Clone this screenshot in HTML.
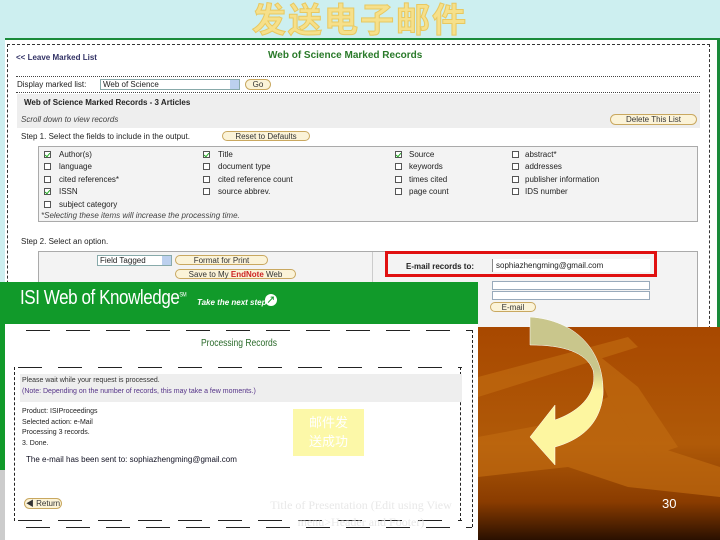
<!DOCTYPE html>
<html><head><meta charset="utf-8"><style>
*{margin:0;padding:0;box-sizing:border-box}
body{width:720px;height:540px;position:relative;overflow:hidden;background:#cdeff0;font-family:"Liberation Sans","Noto Sans CJK SC",sans-serif;font-size:8px;color:#222}
.a{position:absolute;white-space:nowrap}
.btn{position:absolute;border:1px solid #c9a860;border-radius:7px;background:#fbf3d8;font-size:8px;text-align:center;color:#333;line-height:9px}
.cb{position:absolute;width:7px;height:7px;border:1px solid #555;background:#fff}
.cb.on::after{content:"";position:absolute;left:1px;top:0;width:2px;height:4px;border:solid #2a2;border-width:0 1px 1px 0;transform:rotate(40deg)}
.sel{position:absolute;border:1px solid #8aa;background:#fff;font-size:8px;padding-left:2px;line-height:10px}
.sel::after{content:"";position:absolute;right:0;top:0;width:9px;height:100%;background:#bcd0ee}
.dl{position:absolute;height:1px;background:repeating-linear-gradient(90deg,#222 0 24px,transparent 24px 40px)}
</style></head><body>
<div class="a" style="left:0;top:1px;width:720px;text-align:center;font-size:34px;line-height:40px;font-weight:bold;color:#f6e08a;-webkit-text-stroke:1px #e8c860;letter-spacing:2px">发送电子邮件</div>
<!-- upper screenshot -->
<div class="a" style="left:5px;top:38px;width:715px;height:290px;background:#fff;border-top:2px solid #1a8a3a;border-right:3px solid #1a8a3a"></div>
<div class="a" style="left:7px;top:44px;width:703px;height:290px;border:1px dashed #333;border-bottom:none"></div>
<div class="a" style="left:16px;top:53px;color:#336;font-weight:bold">&lt;&lt; Leave Marked List</div>
<div class="a" style="left:268px;top:50px;color:#2a7a2a;font-weight:bold;font-size:10px">Web of Science Marked Records</div>
<div class="a" style="left:16px;top:76px;width:684px;border-top:1px dotted #444"></div>
<div class="a" style="left:17px;top:80px">Display marked list:</div>
<div class="sel" style="left:100px;top:79px;width:140px;height:11px">Web of Science</div>
<div class="btn" style="left:245px;top:79px;width:26px;height:11px">Go</div>
<div class="a" style="left:16px;top:92px;width:684px;border-top:1px dotted #444"></div>
<div class="a" style="left:17px;top:94px;width:683px;height:34px;background:#eee"></div>
<div class="a" style="left:24px;top:98px;font-weight:bold">Web of Science Marked Records - 3 Articles</div>
<div class="a" style="left:21px;top:115px;font-style:italic;color:#444">Scroll down to view records</div>
<div class="btn" style="left:610px;top:114px;width:87px;height:11px">Delete This List</div>
<div class="a" style="left:21px;top:132px">Step 1. Select the fields to include in the output.</div>
<div class="btn" style="left:222px;top:131px;width:88px;height:10px">Reset to Defaults</div>
<div class="a" style="left:38px;top:146px;width:660px;height:76px;background:#f3f3f3;border:1px solid #aaa"></div>
<div class="cb on" style="left:44px;top:151px"></div><div class="a" style="left:59px;top:150px">Author(s)</div>
<div class="cb on" style="left:203px;top:151px"></div><div class="a" style="left:218px;top:150px">Title</div>
<div class="cb on" style="left:395px;top:151px"></div><div class="a" style="left:409px;top:150px">Source</div>
<div class="cb" style="left:512px;top:151px"></div><div class="a" style="left:525px;top:150px">abstract*</div>
<div class="cb" style="left:44px;top:163px"></div><div class="a" style="left:59px;top:162px">language</div>
<div class="cb" style="left:203px;top:163px"></div><div class="a" style="left:218px;top:162px">document type</div>
<div class="cb" style="left:395px;top:163px"></div><div class="a" style="left:409px;top:162px">keywords</div>
<div class="cb" style="left:512px;top:163px"></div><div class="a" style="left:525px;top:162px">addresses</div>
<div class="cb" style="left:44px;top:176px"></div><div class="a" style="left:59px;top:175px">cited references*</div>
<div class="cb" style="left:203px;top:176px"></div><div class="a" style="left:218px;top:175px">cited reference count</div>
<div class="cb" style="left:395px;top:176px"></div><div class="a" style="left:409px;top:175px">times cited</div>
<div class="cb" style="left:512px;top:176px"></div><div class="a" style="left:525px;top:175px">publisher information</div>
<div class="cb on" style="left:44px;top:188px"></div><div class="a" style="left:59px;top:187px">ISSN</div>
<div class="cb" style="left:203px;top:188px"></div><div class="a" style="left:218px;top:187px">source abbrev.</div>
<div class="cb" style="left:395px;top:188px"></div><div class="a" style="left:409px;top:187px">page count</div>
<div class="cb" style="left:512px;top:188px"></div><div class="a" style="left:525px;top:187px">IDS number</div>
<div class="cb" style="left:44px;top:201px"></div><div class="a" style="left:59px;top:200px">subject category</div>
<div class="a" style="left:41px;top:211px;font-style:italic;color:#444">*Selecting these items will increase the processing time.</div>
<div class="a" style="left:21px;top:237px">Step 2. Select an option.</div>
<div class="a" style="left:38px;top:251px;width:660px;height:80px;background:#f3f3f3;border:1px solid #aaa"></div>
<div class="a" style="left:372px;top:252px;width:1px;height:78px;background:#ccc"></div>
<div class="sel" style="left:97px;top:255px;width:75px;height:11px">Field Tagged</div>
<div class="btn" style="left:175px;top:255px;width:93px;height:10px">Format for Print</div>
<div class="btn" style="left:175px;top:269px;width:121px;height:10px">Save to My <b style="color:#c22">EndNote</b> Web</div>
<div class="a" style="left:406px;top:262px;font-weight:bold">E-mail records to:</div>
<div class="a" style="left:492px;top:259px;width:158px;height:13px;background:#fff;border-left:1px solid #888;padding-left:3px;line-height:13px">sophiazhengming@gmail.com</div>
<div class="a" style="left:385px;top:251px;width:272px;height:26px;border:3px solid #e01010"></div>
<div class="a" style="left:492px;top:281px;width:158px;height:9px;background:#fff;border:1px solid #9ab"></div>
<div class="a" style="left:492px;top:291px;width:158px;height:9px;background:#fff;border:1px solid #9ab"></div>
<div class="btn" style="left:490px;top:302px;width:46px;height:10px">E-mail</div>
<!-- orange bg -->
<div class="a" style="left:478px;top:327px;width:242px;height:213px;background:linear-gradient(180deg,#a84800 0%,#b05a08 55%,#8a3c00 82%,#2a1000 100%)"></div>
<svg class="a" style="left:478px;top:327px" width="242" height="213"><g fill="#c06a10" opacity=".7"><path d="M0,110 L80,95 L130,70 L180,120 L242,140 L242,170 L150,160 L90,140 L0,150Z"/><path d="M110,20 L160,60 L200,120 L170,130 L130,70Z"/><path d="M0,50 L150,10 L160,20 L0,70Z"/></g></svg>
<svg class="a" style="left:478px;top:300px" width="242" height="180"><defs><linearGradient id="g" x1="0" y1="0" x2="0" y2="1"><stop offset=".35" stop-color="#c9c68c"/><stop offset=".5" stop-color="#fdf6a0"/></linearGradient></defs><path d="M52,17 C97,20 127,50 125,95 C122,125 102,140 77,147 L77,165 L52,137 L77,105 L77,120 C100,112 120,95 115,70 C108,52 85,45 52,45Z" fill="url(#g)" stroke="#fff" stroke-width=".5"/></svg>
<!-- lower overlay -->
<div class="a" style="left:0;top:282px;width:478px;height:42px;background:#119a2a"></div>
<div class="a" style="left:20px;top:287px;font-size:20px;color:#fff;letter-spacing:-.5px;transform:scaleX(.85);transform-origin:left">ISI Web of Knowledge<sup style="font-size:6px">SM</sup></div>
<div class="a" style="left:197px;top:298px;font-size:8px;color:#fff;font-style:italic;font-weight:bold">Take the next step</div>
<div class="a" style="left:265px;top:294px;width:12px;height:12px;border-radius:50%;background:#fff;color:#119a2a;font-size:9px;text-align:center;line-height:12px;font-weight:bold">↗</div>
<div class="a" style="left:0;top:324px;width:5px;height:146px;background:#119a2a"></div>
<div class="a" style="left:0;top:470px;width:5px;height:70px;background:#ccc"></div>
<div class="a" style="left:5px;top:324px;width:473px;height:216px;background:#fff"></div>
<div class="dl" style="left:26px;top:330px;width:446px"></div>
<div class="a" style="left:472px;top:330px;width:1px;height:197px;border-left:1px dashed #222"></div>
<div class="dl" style="left:26px;top:527px;width:446px"></div>
<div class="a" style="left:0;top:338px;width:478px;text-align:center;color:#2a6a2a;font-size:10px;transform:scaleX(.85)">Processing Records</div>
<div class="dl" style="left:18px;top:367px;width:444px"></div>
<div class="a" style="left:14px;top:367px;width:1px;height:154px;border-left:1px dashed #222"></div>
<div class="a" style="left:460px;top:367px;width:1px;height:154px;border-left:1px dashed #222"></div>
<div class="dl" style="left:18px;top:520px;width:444px"></div>
<div class="a" style="left:20px;top:374px;width:442px;height:28px;background:#eee"></div>
<div class="a" style="left:22px;top:377px;font-size:7px;color:#333">Please wait while your request is processed.</div>
<div class="a" style="left:22px;top:388px;font-size:7px;color:#553388">(Note: Depending on the number of records, this may take a few moments.)</div>
<div class="a" style="left:22px;top:407px;font-size:7px;line-height:10.5px">Product: ISIProceedings<br>Selected action: e-Mail<br>Processing 3 records.<br>3. Done.</div>
<div class="a" style="left:26px;top:455px;font-size:8px;color:#112">The e-mail has been sent to: sophiazhengming@gmail.com</div>
<div class="a" style="left:293px;top:409px;width:71px;height:47px;background:#fcf8a8;color:#fff;font-size:13px;text-align:center;line-height:19px;padding-top:4px">邮件发<br>送成功</div>
<div class="btn" style="left:24px;top:498px;width:38px;height:11px">◀ Return</div>
<div class="a" style="left:250px;top:497px;width:222px;text-align:center;color:#e8e8e8;font-family:'Liberation Serif',serif;font-size:12px;line-height:17px">Title of Presentation (Edit using View<br>menu&gt;Header and Footer)</div>
<div class="a" style="left:662px;top:496px;color:#fff;font-size:13px">30</div>
</body></html>
